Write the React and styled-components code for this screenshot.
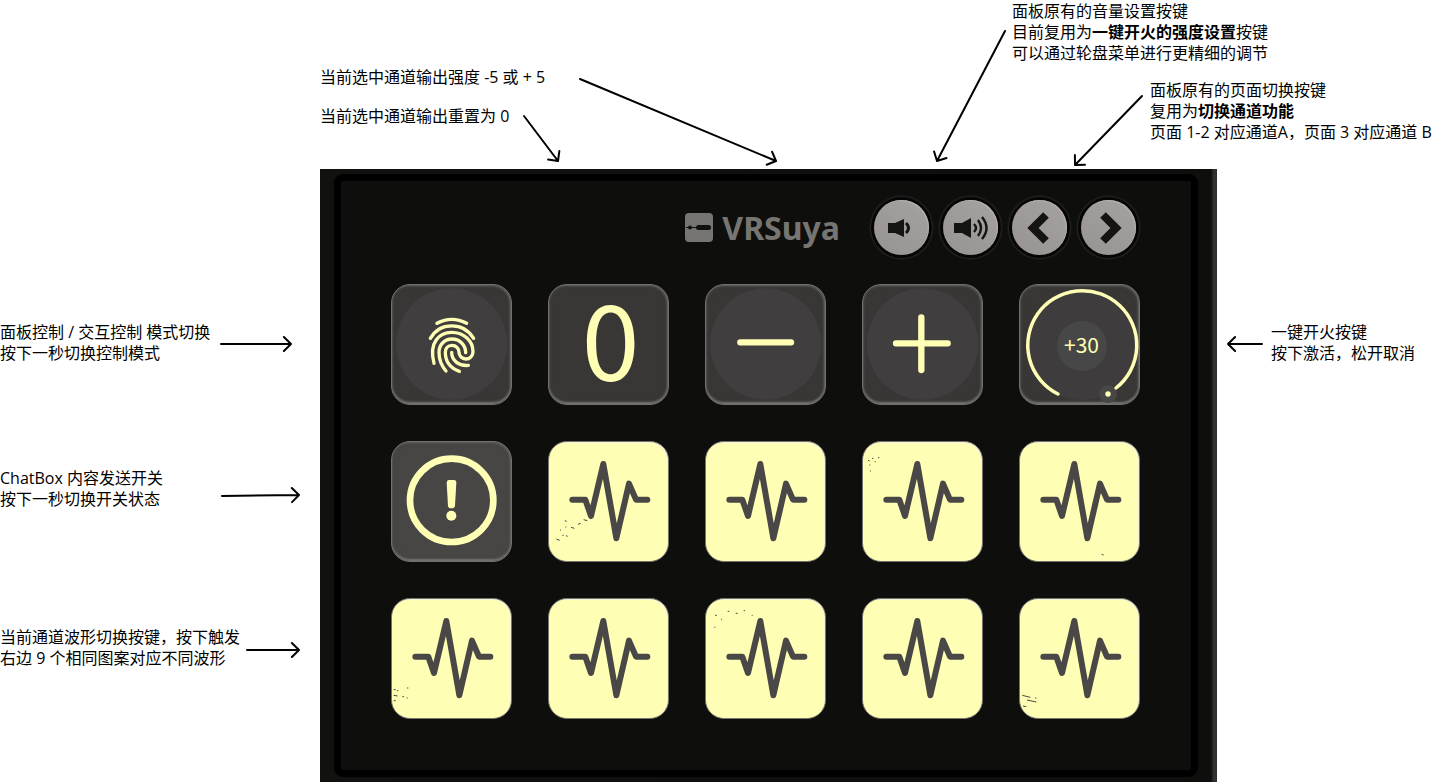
import React from "react";
import styled, { createGlobalStyle } from "styled-components";

const GlobalStyle = createGlobalStyle`
  body {
    margin: 0;
    background: #fff;
    color: #000;
    font-family: "Open Sans", "Noto Sans CJK SC", sans-serif;
    font-size: 16px;
    line-height: 21px;
  }
  p { margin: 0; }
`;

const GLOW = "#feffb4";
const INK = "#4a4846";

const Page = styled.main`
  display: grid;
  grid-template-columns: 320px minmax(864px, 1fr) 232px;
`;

const TopNotes = styled.header`
  grid-column: 1 / -1;
  display: grid;
  grid-template-columns: minmax(0, 1fr) 517px;
  box-sizing: border-box;
  height: 169px;
`;

const OutputNotes = styled.div`
  display: flex;
  flex-direction: column;
  gap: 18px;
  padding: 67px 0 0 320px;
`;

const ButtonNotes = styled.div`
  display: flex;
  flex-direction: column;
  gap: 16px;
  padding-top: 1px;
`;

const LeftNotes = styled.aside`
  padding-top: 153px;
`;

const RightNotes = styled.aside`
  padding: 153px 0 0 10px;
`;

const Note = styled.div`
  display: flex;
  align-items: ${(p) => p.$align || "flex-start"};
  justify-content: ${(p) => p.$justify || "flex-start"};
  gap: ${(p) => p.$gap || 0}px;
  margin-top: ${(p) => p.$above || 0}px;
  padding-left: ${(p) => p.$indent || 0}px;
  padding-right: ${(p) => p.$end || 0}px;
  white-space: nowrap;
`;

const ArrowSvg = styled.svg`
  flex: none;
  overflow: visible;
  fill: none;
  stroke: #000;
  stroke-width: 2;
  stroke-linecap: round;
  stroke-linejoin: round;
`;

const Panel = styled.section`
  padding: 5px 19px 5px 14px;
  background: linear-gradient(to right, #111210, #0e0f0d calc(100% - 6px), #343434 calc(100% - 3px), #2b2d31);
`;

const Bezel = styled.div`
  display: flex;
  justify-content: center;
  border: 7px solid #000;
  border-radius: 9px;
  padding: 19px 1px 51px 0;
  background: #0e0e0c;
`;

const Deck = styled.div`
  display: flex;
  flex-direction: column;
  gap: 29px;
`;

const Toolbar = styled.div`
  display: flex;
  align-items: center;
  justify-content: flex-end;
  gap: 14px;
  padding-right: 4px;
`;

const Brand = styled.div`
  display: flex;
  align-items: center;
  gap: 9px;
  margin-right: 20px;
  color: #777572;
  font: bold 32px/40px "Noto Sans", sans-serif;
`;

const RoundButton = styled.button`
  display: grid;
  place-items: center;
  width: 55px;
  height: 55px;
  padding: 0;
  border: 0;
  border-radius: 50%;
  color: #141413;
  background: linear-gradient(35deg, #979390, #a09c99 60%, #a5a19e);
  box-shadow: inset -1px 1px 1px #b4b0ad, 0 0 0 3px #050505, 0 0 2px 4px #2c2b2a;
`;

const Keys = styled.div`
  display: grid;
  grid-template-columns: repeat(5, 121px);
  grid-auto-rows: 121px;
  gap: 36px;
`;

const Key = styled.button`
  display: grid;
  place-items: center;
  box-sizing: border-box;
  width: 121px;
  height: 121px;
  padding: 0;
  border: 1px solid ${(p) => (p.$lit ? "#77746e" : "#72706e")};
  border-radius: 19px;
  color: ${(p) => (p.$lit ? INK : GLOW)};
  background: ${(p) => (p.$lit ? GLOW : p.$tone || "#383736")};
  box-shadow: ${(p) =>
    p.$lit
      ? "inset -1px 1px 0 #f4f4dc"
      : "inset -1px 1px 2px #65625f, inset 0 -2px 2px #757270, inset 0 0 5px #454341"};
`;

const KeyArt = styled.svg`
  grid-area: 1 / 1;
  width: 121px;
  height: 121px;
  margin: -1px;
  fill: none;
  stroke: currentColor;
  stroke-linecap: round;
  stroke-linejoin: round;
`;

const Digit = styled.span`
  grid-area: 1 / 1;
  padding-left: ${(p) => p.$nudge || 0}px;
  padding-bottom: ${(p) => p.$lift || 0}px;
  font: ${(p) => p.$size}px/${(p) => p.$line}px "Noto Sans CJK SC", sans-serif;
`;

function Arrow({ width, height, box, from, to }) {
  const angle = Math.atan2(to[1] - from[1], to[0] - from[0]);
  const barb = (turn) => [
    to[0] - 10 * Math.cos(angle + turn),
    to[1] - 10 * Math.sin(angle + turn),
  ];
  const a = barb(0.78);
  const b = barb(-0.78);
  return (
    <ArrowSvg width={width} height={box || height} aria-hidden="true">
      <path d={`M${from}L${to}M${a}L${to}L${b}`} />
    </ArrowSvg>
  );
}

const Disc = () => <circle cx="182" cy="180" r="167" fill="#403e3e" stroke="none" />;

const Fingerprint = () => (
  <KeyArt viewBox="0 0 363 363">
    <Disc />
    <g transform="translate(-33 -42)" strokeWidth="10">
      <path d="M171 160Q215 136 260 160" />
      <path d="M151 205C180 155 250 155 281 205" />
      <path d="M162 280C145 215 180 187 215 187C252 187 279 213 279 245C279 258 269 267 258 267C246 267 237 258 237 247C237 235 228 226 216 226C204 226 196 235 196 247C196 275 212 295 238 304" />
      <path d="M198 303C184 287 177 268 177 247C177 224 194 207 216 207C239 207 257 225 257 248" />
      <path d="M215 247C215 272 237 289 265 286" />
    </g>
  </KeyArt>
);

const Minus = () => (
  <KeyArt viewBox="0 0 363 363">
    <Disc />
    <path strokeWidth="19" d="M106 175H258" />
  </KeyArt>
);

const Plus = () => (
  <KeyArt viewBox="0 0 363 363">
    <Disc />
    <path strokeWidth="19" d="M102 178H257M178 100V258" />
  </KeyArt>
);

const Dial = () => (
  <KeyArt viewBox="0 0 121 121">
    <circle cx="63" cy="62" r="54" fill="#3e3c3c" stroke="none" />
    <circle cx="63" cy="62" r="25" fill="#484747" stroke="none" />
    <circle cx="89" cy="110" r="9" fill="#484747" stroke="none" />
    <path strokeWidth="3.5" d="M39 110A54.500 54.500 0 1 1 97 104" />
    <circle cx="89" cy="110" r="2.700" fill="currentColor" stroke="none" />
  </KeyArt>
);

const Alert = () => (
  <KeyArt viewBox="0 0 363 363">
    <circle cx="182" cy="178" r="125" strokeWidth="20" />
    <path
      fill="currentColor"
      stroke="none"
      d="M173 117H189Q196 117 196 125L192 194Q191 202 181 202Q172 202 171 194L167 125Q167 117 173 117Z"
    />
    <circle cx="181" cy="224" r="15" fill="currentColor" stroke="none" />
  </KeyArt>
);

const Wave = ({ wear }) => (
  <KeyArt viewBox="0 0 363 363">
    <path strokeWidth="18" d="M73 176H112L129 225L166 69L205 292L243 128L264 176H298" />
    {wear && <path strokeWidth="3" strokeLinecap="butt" d={wear} />}
  </KeyArt>
);

const WEAR = [
  "M25 294l10 4M43 283h4M54 284l5 2M36 267h3M50 238l6 4M69 259l10 3M90 250l8-3M107 236l11 3M52 258h3",
  null,
  "M18 58l5 2M30 52h4M22 72h3M38 62h3M48 50h4M24 90h3",
  "M248 340l6 2",
  "M8 275h6M18 278h4M8 292l12 2M34 296h5M48 270h4M47 300h3M8 308h6",
  null,
  "M30 52h5M48 64h3M68 40h5M92 46h6M116 38h4M28 88h3M140 52h3",
  null,
  "M10 292l24 6M24 306l28 6M12 324l10 2M48 300h4",
];

const Speaker = ({ loud }) => (
  <svg width="40" height="30" viewBox="0 0 40 30" fill="none" stroke="currentColor" aria-hidden="true">
    {loud ? (
      <>
        <path fill="currentColor" stroke="none" d="M3 10H11V20H3ZM11 10L20 5V25L11 20Z" />
        <path strokeWidth="2.400" d="M23 11Q27 15 23 19M27 7Q33 15 27 23M31 4Q40 15 31 26" />
      </>
    ) : (
      <>
        <path fill="currentColor" stroke="none" d="M6 10H13V20H6ZM13 10L22 6V24L13 20Z" />
        <path strokeWidth="3" d="M24 10Q29 15 24 20" />
      </>
    )}
  </svg>
);

const Chevron = ({ next }) => (
  <svg width="40" height="40" viewBox="0 0 40 40" fill="none" stroke="currentColor" strokeWidth="8" aria-hidden="true">
    <path d={next ? "M14 7L27 20L14 33" : "M26 7L13 20L26 33"} />
  </svg>
);

const Logo = () => (
  <svg width="28" height="29" viewBox="0 0 28 29" aria-hidden="true">
    <rect width="28" height="29" rx="4" fill="#777572" />
    <circle cx="5" cy="14.500" r="2" fill="#11110f" />
    <rect x="1" y="14" width="22" height="1" fill="#11110f" />
    <rect x="11" y="12" width="15" height="5" rx="2.500" fill="#11110f" />
  </svg>
);

export default function App() {
  return (
    <>
      <GlobalStyle />
      <Page>
        <TopNotes>
          <OutputNotes>
            <Note $gap={34}>
              <p>当前选中通道输出强度 -5 或 + 5</p>
              <Arrow width={198} box={21} from={[1, 12]} to={[197, 94]} />
            </Note>
            <Note $gap={14}>
              <p>当前选中通道输出重置为 0</p>
              <Arrow width={36} box={21} from={[1, 10]} to={[35, 55]} />
            </Note>
          </OutputNotes>
          <ButtonNotes>
            <Note $gap={6}>
              <Arrow width={74} box={63} from={[73, 30]} to={[5, 160]} />
              <p>
                面板原有的音量设置按键
                <br />
                目前复用为<b>一键开火的强度设置</b>按键
                <br />
                可以通过轮盘菜单进行更精细的调节
              </p>
            </Note>
            <Note $gap={6} $indent={138}>
              <Arrow width={74} box={63} from={[72, 16]} to={[5, 85]} />
              <p>
                面板原有的页面切换按键
                <br />
                复用为<b>切换通道功能</b>
                <br />
                页面 1-2 对应通道A，页面 3 对应通道 B
              </p>
            </Note>
          </ButtonNotes>
        </TopNotes>

        <LeftNotes>
          <Note $justify="space-between" $align="center" $end={28}>
            <p>
              面板控制 / 交互控制 模式切换
              <br />
              按下一秒切换控制模式
            </p>
            <Arrow width={72} height={18} from={[1, 10]} to={[71, 10]} />
          </Note>
          <Note $justify="space-between" $align="center" $end={20} $above={104}>
            <p>
              ChatBox 内容发送开关
              <br />
              按下一秒切换开关状态
            </p>
            <Arrow width={80} height={18} from={[2, 16]} to={[79, 15]} />
          </Note>
          <Note $justify="space-between" $align="center" $end={20} $above={117}>
            <p>
              当前通道波形切换按键，按下触发
              <br />
              右边 9 个相同图案对应不同波形
            </p>
            <Arrow width={54} height={18} from={[1, 11]} to={[53, 11]} />
          </Note>
        </LeftNotes>

        <Panel>
          <Bezel>
            <Deck>
              <Toolbar>
                <Brand>
                  <Logo />
                  VRSuya
                </Brand>
                <RoundButton aria-label="音量减小"><Speaker /></RoundButton>
                <RoundButton aria-label="音量增大"><Speaker loud /></RoundButton>
                <RoundButton aria-label="上一页"><Chevron /></RoundButton>
                <RoundButton aria-label="下一页"><Chevron next /></RoundButton>
              </Toolbar>
              <Keys>
                <Key aria-label="模式切换"><Fingerprint /></Key>
                <Key><Digit $size={104} $line={100} $nudge={4} $lift={18}>0</Digit></Key>
                <Key aria-label="强度减"><Minus /></Key>
                <Key aria-label="强度加"><Plus /></Key>
                <Key>
                  <Dial />
                  <Digit $size={21} $line={21} $nudge={4}>+30</Digit>
                </Key>
                <Key aria-label="ChatBox" $tone="#484645"><Alert /></Key>
                {WEAR.map((wear, i) => (
                  <Key key={i} $lit aria-label={`波形 ${i + 1}`}>
                    <Wave wear={wear} />
                  </Key>
                ))}
              </Keys>
            </Deck>
          </Bezel>
        </Panel>

        <RightNotes>
          <Note $gap={8} $align="center">
            <Arrow width={36} height={18} from={[35, 10]} to={[1, 10]} />
            <p>
              一键开火按键
              <br />
              按下激活，松开取消
            </p>
          </Note>
        </RightNotes>
      </Page>
    </>
  );
}
